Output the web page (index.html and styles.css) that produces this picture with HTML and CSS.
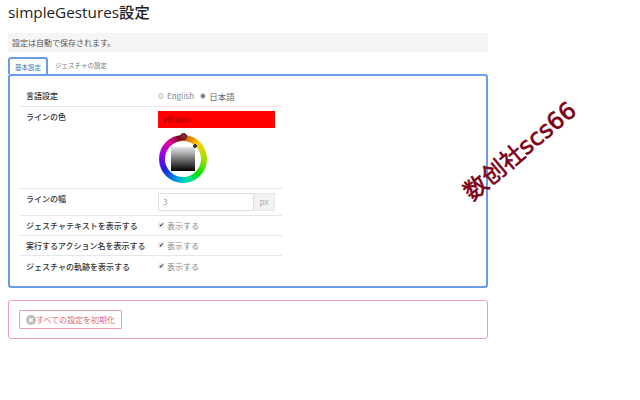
FILE: index.html
```html
<!DOCTYPE html>
<html lang="ja">
<head>
<meta charset="utf-8">
<title>simpleGestures設定</title>
<link rel="stylesheet" href="styles.css">
</head>
<body>
<h1 class="title">simpleGestures設定</h1>
<div class="notice">設定は自動で保存されます。</div>
<ul class="tabs">
  <li class="tab active">基本設定</li>
  <li class="tab">ジェスチャの設定</li>
</ul>
<section class="panel">
  <div class="settings">
    <div class="row lang">
      <div class="label">言語設定</div>
      <div class="value radios">
        <span class="radio"></span><span class="opt">English</span>
        <span class="radio on"></span><span class="opt ja">日本語</span>
      </div>
    </div>
    <div class="row color">
      <div class="label">ラインの色</div>
      <div class="value">
        <div class="color-input">#ff0000</div>
        <div class="wheel">
          <div class="wheel-hole"></div>
          <div class="square"></div>
          <span class="marker hue"></span>
          <span class="marker sat"></span>
        </div>
      </div>
    </div>
    <div class="row width">
      <div class="label">ラインの幅</div>
      <div class="value">
        <div class="input-group"><div class="num">3</div><div class="addon">px</div></div>
      </div>
    </div>
    <div class="row check">
      <div class="label">ジェスチャテキストを表示する</div>
      <div class="value"><span class="box">✔</span>表示する</div>
    </div>
    <div class="row check">
      <div class="label">実行するアクション名を表示する</div>
      <div class="value"><span class="box">✔</span>表示する</div>
    </div>
    <div class="row check last">
      <div class="label">ジェスチャの軌跡を表示する</div>
      <div class="value"><span class="box">✔</span>表示する</div>
    </div>
  </div>
</section>
<section class="danger">
  <div class="reset">
    <svg class="reset-icon" viewBox="0 0 10 10" width="10" height="10"><circle cx="5" cy="5" r="5" fill="#bdbdbd"/><path d="M3.2 3.2l3.6 3.6M6.8 3.2l-3.6 3.6" stroke="#fff" stroke-width="1.3"/></svg>
    <span>すべての設定を初期化</span>
  </div>
</section>
<div class="watermark">数创社scs66</div>
</body>
</html>
```
FILE: styles.css
```css
* { box-sizing: border-box; }
html, body { height: 100%; }
body {
  margin: 0;
  padding: 0 152px 0 8px;
  background: #fff;
  color: #333;
  font-family: "Noto Sans CJK JP", "Open Sans", sans-serif;
  font-size: 8px;
  overflow: hidden;
  position: relative;
}
.title {
  margin: 0;
  height: 33px;
  font-family: "Open Sans", "Noto Sans CJK JP", sans-serif;
  font-size: 15.3px;
  line-height: 24px;
  font-weight: 500;
  color: #222;
}
.notice {
  height: 19px;
  line-height: 19px;
  padding-left: 4px;
  background: #f5f5f5;
  color: #555;
}
.tabs {
  display: flex;
  list-style: none;
  margin: 5px 0 0;
  padding: 0;
  height: 17px;
}
.tab {
  height: 17px;
  padding: 0 7px;
  line-height: 17px;
  font-size: 6.5px;
  color: #777;
}
.tab.active {
  color: #337ab7;
  border: 2px solid #6a9ce6;
  border-bottom: 0;
  border-radius: 3px 3px 0 0;
  background: #fff;
  line-height: 16px;
  padding: 0 5px;
}
.panel {
  height: 214px;
  padding: 11px 10px 0;
  border: 2px solid #6a9ce6;
  border-radius: 3px;
}
.settings { width: 262px; }
.row {
  display: flex;
  border-bottom: 1px solid #e6e6e6;
}
.row.last { border-bottom: 0; }
.label {
  width: 138px;
  padding-left: 6px;
  font-weight: 500;
  color: #333;
  flex: none;
}
.value { color: #888; }
.lang { height: 20px; align-items: center; padding-bottom: 2px; }
.radios { display: flex; align-items: center; }
.radio {
  width: 6px;
  height: 6px;
  border: 1px solid #ccc;
  border-radius: 50%;
  background: #e8e8e8;
  margin-right: 3px;
}
.radio.on { background: #777; border-color: #ddd; margin-left: 6px; }
.opt.ja { font-size: 8.5px; color: #666; }
.color { height: 82px; padding-top: 4px; }
.color .label { line-height: 12px; }
.color-input {
  width: 117px;
  height: 17px;
  line-height: 17px;
  padding-left: 5px;
  background: #f00;
  color: #a00000;
}
.wheel {
  position: relative;
  width: 48px;
  height: 48px;
  margin: 7px 0 0 1px;
  border-radius: 50%;
  background: conic-gradient(#d05000, #ffcc00 45deg, #a0e000 90deg, #00e000 135deg, #00e0b0 170deg, #00a0e0 195deg, #2020e0 240deg, #a000e0 285deg, #e000a0 320deg, #800020 350deg, #d05000);
}
.wheel-hole {
  position: absolute;
  inset: 6px;
  background: #fff;
  border-radius: 50%;
}
.square {
  position: absolute;
  left: 12px;
  top: 12px;
  width: 24px;
  height: 24px;
  background: linear-gradient(#e8e8e8, #000);
}
.marker {
  position: absolute;
  border-radius: 50%;
  border: 1px solid #222;
}
.hue { left: 21px; top: -2px; width: 7px; height: 7px; background: #a02030; }
.sat { left: 34px; top: 9px; width: 4px; height: 4px; background: #444; }
.width { height: 27px; padding-top: 4px; }
.width .label { line-height: 12px; }
.input-group { display: flex; width: 117px; height: 18px; }
.num {
  width: 96px;
  padding-left: 4px;
  border: 1px solid #ddd;
  line-height: 16px;
  color: #999;
  border-radius: 1px 0 0 1px;
}
.addon {
  width: 21px;
  border: 1px solid #e4e4e4;
  border-left: 0;
  background: #f2f2f2;
  text-align: center;
  line-height: 16px;
  color: #aaa;
}
.check { height: 20px; align-items: center; padding-bottom: 1px; }
.check.last { height: 21px; }
.check .value { display: flex; align-items: center; }
.box {
  width: 6px;
  height: 6px;
  margin-right: 3px;
  font-size: 6px;
  line-height: 6px;
  background: #eee;
  color: #333;
  text-align: center;
}
.danger {
  margin-top: 12px;
  height: 39px;
  padding: 9px 10px;
  border: 1px solid #eaa0a6;
  border-radius: 3px;
}
.reset {
  display: flex;
  align-items: center;
  width: 103px;
  height: 19px;
  padding-left: 6px;
  border: 1px solid #eaa0a6;
  border-radius: 1px;
  color: #dd6a74;
  font-size: 8px;
}
.reset-icon { flex: none; }
.watermark {
  position: absolute;
  left: 440px;
  top: 136px;
  width: 160px;
  font-family: "DejaVu Sans", "Noto Sans CJK SC", sans-serif;
  font-size: 23.5px;
  line-height: 30px;
  font-weight: 400;
  text-align: center;
  -webkit-text-stroke: 0.6px #7d0014;
  white-space: nowrap;
  color: #7d0014;
  transform: rotate(-40deg);
}
```
